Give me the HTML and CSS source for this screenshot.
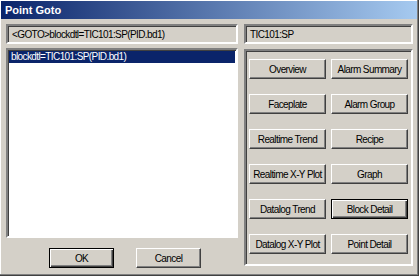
FILE: index.html
```html
<!DOCTYPE html>
<html>
<head>
    <meta charset="utf-8" />
    <title>Point Goto</title>
    <link rel="stylesheet" href="styles.css">
</head>
<body>
    <div class="window">
        <div class="titlebar">Point Goto</div>

        <div class="content">
            <div class="left">
                <div class="field">&lt;GOTO&gt;blockdtl=TIC101:SP(PID.bd1)</div>
                <div class="list">
                    <div class="item selected">blockdtl=TIC101:SP(PID.bd1)</div>
                </div>
                <div class="actions">
                    <button class="btn default ok">OK</button>
                    <button class="btn cancel">Cancel</button>
                </div>
            </div>

            <div class="right">
                <div class="field">TIC101:SP</div>
                <div class="panel">
                    <button class="btn">Overview</button>
                    <button class="btn">Alarm Summary</button>
                    <button class="btn">Faceplate</button>
                    <button class="btn">Alarm Group</button>
                    <button class="btn">Realtime Trend</button>
                    <button class="btn">Recipe</button>
                    <button class="btn">Realtime X-Y Plot</button>
                    <button class="btn">Graph</button>
                    <button class="btn">Datalog Trend</button>
                    <button class="btn default">Block Detail</button>
                    <button class="btn">Datalog X-Y Plot</button>
                    <button class="btn">Point Detail</button>
                </div>
            </div>
        </div>
    </div>
</body>
</html>
```

FILE: styles.css
```css
body {
    margin: 0;
    background: #d4d0c8;
    font-family: "Liberation Sans", Arial, sans-serif;
    font-size: 10px;
    letter-spacing: -0.6px;
    color: #000;
}
.window {
    width: 419px;
    height: 276px;
    box-sizing: border-box;
    background: #d4d0c8;
    border-right: 1px solid #404040;
    border-bottom: 1px solid #404040;
    box-shadow: inset -1px -1px 0 #808080, inset 1px 1px 0 #ffffff;
    padding: 1px;
}
.titlebar {
    height: 18px;
    line-height: 18px;
    padding-left: 4px;
    background: linear-gradient(to right, #0a246a, #a6caf0);
    color: #fff;
    font-size: 11px;
    letter-spacing: 0;
    font-weight: bold;
}
.content {
    display: flex;
    gap: 6px;
    padding: 5px 0 0 5px;
}
.left {
    width: 232px;
    display: flex;
    flex-direction: column;
}
.right {
    width: 169px;
    display: flex;
    flex-direction: column;
}
.field {
    height: 20px;
    box-sizing: border-box;
    border: 2px solid;
    border-color: #808080 #ffffff #ffffff #808080;
    box-shadow: inset 1px 1px 0 #404040, inset -1px -1px 0 #d4d0c8;
    padding: 3px 4px;
    line-height: 12px;
    white-space: nowrap;
}
.list {
    margin-top: 4px;
    height: 190px;
    box-sizing: border-box;
    background: #fff;
    border: 2px solid;
    border-color: #808080 #ffffff #ffffff #808080;
    box-shadow: inset 1px 1px 0 #404040;
    padding: 1px 1px;
}
.item {
    height: 12px;
    line-height: 12px;
    padding-left: 2px;
}
.selected {
    background: #0a246a;
    color: #fff;
}
.actions {
    display: flex;
    gap: 22px;
    padding: 10px 0 0 43px;
}
.actions .btn {
    width: 65px;
}
.panel {
    margin-top: 5px;
    height: 217px;
    box-sizing: border-box;
    border: 2px solid;
    border-color: #808080 #ffffff #ffffff #808080;
    box-shadow: inset 1px 1px 0 #404040, inset -1px -1px 0 #d4d0c8;
    padding: 8px 3px 0 3px;
    display: grid;
    grid-template-columns: 77px 77px;
    grid-auto-rows: 20px;
    column-gap: 5px;
    row-gap: 15px;
}
.btn {
    height: 20px;
    box-sizing: border-box;
    margin: 0;
    padding: 0;
    font-family: "Liberation Sans", Arial, sans-serif;
    font-size: 10px;
    letter-spacing: -0.6px;
    color: #000;
    background: #d4d0c8;
    border: 1px solid;
    border-color: #ffffff #404040 #404040 #ffffff;
    box-shadow: inset -1px -1px 0 #808080;
    white-space: nowrap;
}
.btn.default {
    border-color: #000;
    box-shadow: inset 1px 1px 0 #ffffff, inset -1px -1px 0 #404040, inset -2px -2px 0 #808080;
}
```
